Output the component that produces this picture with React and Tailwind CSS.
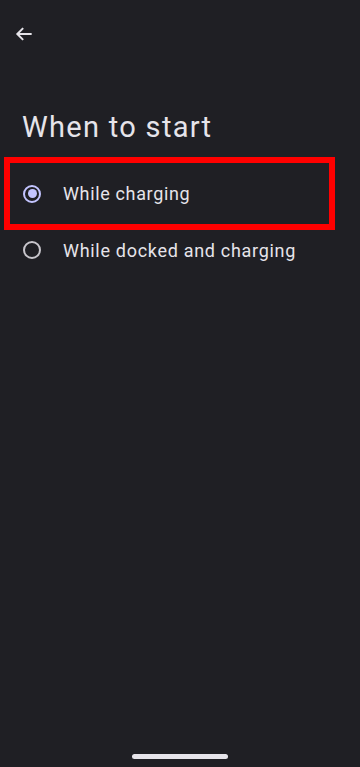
import React from "react";

export default function App() {
  return (
    <div className="w-[360px] h-[767px] bg-[#1f1f24] flex flex-col relative" style={{ fontFamily: "Roboto, 'Noto Sans', sans-serif" }}>
      <div className="h-[68px] flex items-center pl-[14px]">
        <svg width="20" height="20" viewBox="0 0 24 24" fill="none" stroke="#e6e4ea" strokeWidth="2.4" strokeLinecap="square">
          <path d="M20 12H5" />
          <path d="M11 5l-7 7 7 7" strokeLinecap="butt" />
        </svg>
      </div>
      <div className="pl-[22px] pt-[41px] text-[29px] leading-[36px] tracking-[1.3px] text-[#e6e4ea]">When to start</div>
      <div className="mt-[12px] ml-[4px] w-[331px] border-[6px] border-[#ff0000] h-[73px] flex items-center pl-[13px]">
        <div className="w-[18px] h-[18px] rounded-full border-2 border-[#c3c4ff] flex items-center justify-center">
          <div className="w-[9px] h-[9px] rounded-full bg-[#c3c4ff]" />
        </div>
        <span className="ml-[22px] text-[18px] tracking-[0.65px] text-[#e6e4ea]">While charging</span>
      </div>
      <div className="h-[40px] flex items-center pl-[23px]">
        <div className="w-[18px] h-[18px] rounded-full border-2 border-[#c8c6cc]" />
        <span className="ml-[22px] text-[18px] tracking-[0.7px] text-[#e6e4ea]">While docked and charging</span>
      </div>
      <div className="flex-1" />
      <div className="flex justify-center pb-[8px]">
        <div className="w-[96px] h-[5px] rounded-full bg-[#e6e4ea]" />
      </div>
    </div>
  );
}
